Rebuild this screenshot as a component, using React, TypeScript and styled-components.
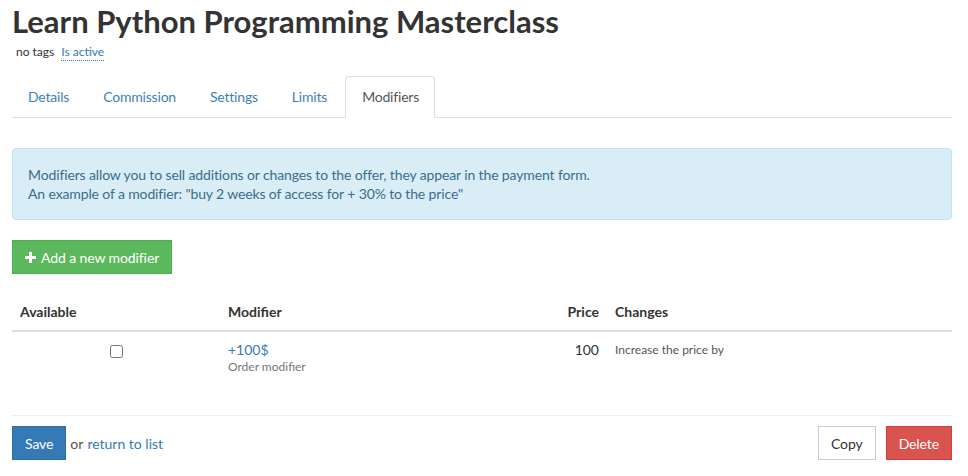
import styled, { createGlobalStyle } from "styled-components";

const GlobalStyle = createGlobalStyle`
  body {
    margin: 0;
    font-family: Lato, "Liberation Sans", sans-serif;
    color: #333;
    background: #fff;
  }
`;

const Page = styled.div`
  width: 940px;
  padding: 0 12px;
`;

const Title = styled.h1`
  margin: 0;
  padding-top: 3px;
  font-size: 31px;
  line-height: 36px;
  font-weight: 700;
  color: #333;
`;

const Meta = styled.div`
  display: flex;
  gap: 7px;
  margin: 5px 0 0 4px;
  font-size: 12px;
  line-height: 16px;
`;

const DottedLink = styled.a`
  color: #337ab7;
  text-decoration: none;
  border-bottom: 1px dotted #337ab7;
`;

const Tabs = styled.ul`
  display: flex;
  list-style: none;
  margin: 15px 0 0;
  padding: 0;
  border-bottom: 1px solid #ddd;
`;

const Tab = styled.li<{ $active?: boolean }>`
  margin: 0 2px -1px 0;
  padding: ${(p) => (p.$active ? "10px 15px 11px 16px" : "11px 16px 12px 16px")};
  font-size: 14px;
  line-height: 19px;
  letter-spacing: -0.2px;
  color: ${(p) => (p.$active ? "#555" : "#3f7fb8")};
  background: ${(p) => (p.$active ? "#fff" : "transparent")};
  border: ${(p) => (p.$active ? "1px solid #ddd" : "none")};
  border-bottom-color: #fff;
  border-radius: 4px 4px 0 0;
`;

const Alert = styled.div`
  margin-top: 30px;
  padding: 16px 15px;
  background: #d9edf7;
  border: 1px solid #bce8f1;
  border-radius: 4px;
  color: #3a6d8c;
  font-size: 14px;
  line-height: 19px;
  letter-spacing: -0.13px;
`;

const Button = styled.button<{ $variant: "success" | "primary" | "default" | "danger" }>`
  display: inline-flex;
  align-items: center;
  gap: 5px;
  height: 34px;
  padding: 0 12px;
  font-family: inherit;
  font-size: 14px;
  letter-spacing: -0.1px;
  border-radius: 0;
  cursor: pointer;
  color: ${(p) => (p.$variant === "default" ? "#333" : "#fff")};
  background: ${(p) =>
    ({ success: "#5cb85c", primary: "#337ab7", default: "#fff", danger: "#d9534f" })[p.$variant]};
  border: 1px solid
    ${(p) =>
      ({ success: "#4cae4c", primary: "#2e6da4", default: "#ccc", danger: "#d43f3a" })[p.$variant]};
`;

const AddRow = styled.div`
  margin-top: 20px;
`;

const Table = styled.table`
  width: 100%;
  margin-top: 21px;
  border-collapse: collapse;
  font-size: 14px;
`;

const Th = styled.th<{ $align?: string; $width?: string }>`
  text-align: ${(p) => p.$align || "left"};
  width: ${(p) => p.$width || "auto"};
  padding: 7px 8px 9px;
  line-height: 19px;
  font-weight: 700;
  color: #333;
  border-bottom: 2px solid #ddd;
`;

const Td = styled.td<{ $align?: string }>`
  text-align: ${(p) => p.$align || "left"};
  vertical-align: top;
  padding: 8px 8px 11px;
  line-height: 19px;
`;

const Checkbox = styled.input`
  margin: 5px 0 0;
  width: 13px;
  height: 13px;
`;

const ModLink = styled.a`
  display: block;
  color: #337ab7;
  text-decoration: none;
`;

const Small = styled.div`
  font-size: 12px;
  line-height: 16px;
  color: #777;
`;

const ChangeText = styled.div`
  font-size: 12px;
  line-height: 19px;
  color: #555;
`;

const Footer = styled.div`
  display: flex;
  align-items: center;
  justify-content: space-between;
  margin-top: 29px;
  padding-top: 10px;
  border-top: 1px solid #eee;
`;

const FooterLeft = styled.div`
  display: flex;
  align-items: center;
  gap: 4px;
  font-size: 14px;
  color: #555;
`;

const FooterRight = styled.div`
  display: flex;
  gap: 10px;
`;

const TextLink = styled.a`
  color: #337ab7;
  text-decoration: none;
`;

const PlusIcon = () => (
  <svg width="11" height="11" viewBox="0 0 11 11">
    <path d="M4 0h3v4h4v3H7v4H4V7H0V4h4z" fill="#fff" />
  </svg>
);

export default function App() {
  return (
    <Page>
      <GlobalStyle />
      <Title>Learn Python Programming Masterclass</Title>
      <Meta>
        <span>no tags</span>
        <DottedLink>Is active</DottedLink>
      </Meta>
      <Tabs>
        <Tab>Details</Tab>
        <Tab>Commission</Tab>
        <Tab>Settings</Tab>
        <Tab>Limits</Tab>
        <Tab $active>Modifiers</Tab>
      </Tabs>
      <Alert>
        Modifiers allow you to sell additions or changes to the offer, they appear in the payment form.
        <br />
        An example of a modifier: "buy 2 weeks of access for + 30% to the price"
      </Alert>
      <AddRow>
        <Button $variant="success">
          <PlusIcon />
          Add a new modifier
        </Button>
      </AddRow>
      <Table>
        <thead>
          <tr>
            <Th $width="192px">Available</Th>
            <Th>Modifier</Th>
            <Th $align="right" $width="70px">Price</Th>
            <Th $width="329px">Changes</Th>
          </tr>
        </thead>
        <tbody>
          <tr>
            <Td $align="center">
              <Checkbox type="checkbox" />
            </Td>
            <Td>
              <ModLink>+100$</ModLink>
              <Small>Order modifier</Small>
            </Td>
            <Td $align="right">100</Td>
            <Td>
              <ChangeText>Increase the price by</ChangeText>
            </Td>
          </tr>
        </tbody>
      </Table>
      <Footer>
        <FooterLeft>
          <Button $variant="primary">Save</Button>
          <span>or</span>
          <TextLink>return to list</TextLink>
        </FooterLeft>
        <FooterRight>
          <Button $variant="default">Copy</Button>
          <Button $variant="danger">Delete</Button>
        </FooterRight>
      </Footer>
    </Page>
  );
}
